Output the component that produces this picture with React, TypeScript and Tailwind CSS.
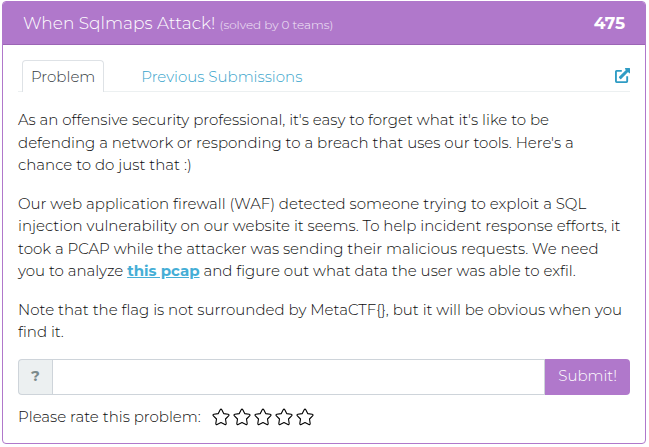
import { useState } from "react";
import type { FormEvent } from "react";

const ratings = [1, 2, 3, 4, 5];

function ExternalLinkIcon() {
  return (
    <svg viewBox="0 0 512 512" className="size-[15px]" fill="currentColor" aria-hidden="true">
      <path d="M448 279v177a56 56 0 0 1-56 56H56a56 56 0 0 1-56-56V120a56 56 0 0 1 56-56h176v64H64v320h320V279zM512 16v148c0 18-18 24-29 13l-38-38-234 234c-9 9-24 9-33 0l-39-39c-9-9-9-24 0-33L373 67l-28-28C333 27 340 0 358 0h138c9 0 16 7 16 16z" />
    </svg>
  );
}

function Star() {
  return (
    <svg viewBox="0 0 20 20" className="size-5" fill="none" stroke="currentColor" strokeWidth="1.1" strokeLinecap="round" strokeLinejoin="round" aria-hidden="true">
      <path d="M9.2 2.8Q10 1.4 10.8 2.8L12.7 6.6 17.2 7.3Q18.7 7.7 17.6 8.8L14.5 12 15.2 16.6Q15.2 18 13.9 17.4L10 15.6 6.1 17.4Q4.8 18 4.8 16.6L5.5 12 2.4 8.8Q1.3 7.7 2.8 7.3L7.3 6.6Z" />
    </svg>
  );
}

export default function App() {
  const [flag, setFlag] = useState("");
  const submit = (event: FormEvent) => event.preventDefault();

  return (
    <main className="bg-white pt-px pr-[3px] pb-1 pl-0.5 font-['Montserrat','Inter',sans-serif] text-[15px] font-light text-[#0c0c0c]">
      <article className="rounded-[4px] border border-[#b078cb]">
        <header className="flex items-center justify-between rounded-t-[3px] border-b border-[#9b65b5] bg-[#b078cb] px-5 py-2 text-white">
          <h1 className="text-[17px] leading-[26px]">
            When Sqlmaps Attack! <small className="text-xs text-white/85">(solved by 0 teams)</small>
          </h1>
          <strong className="text-[17px] leading-[26px] font-bold">475</strong>
        </header>

        <div className="p-[15px]">
          <nav className="flex items-end border-b border-[#ecf0f1] pl-1">
            <a href="#problem" className="-mb-px rounded-t-[4px] border border-b-0 border-[#dee2e6] bg-white px-2 pt-1 pb-[3px] leading-6 text-[#343a40]">
              Problem
            </a>
            <a href="#submissions" className="ml-[37px] pb-0.5 leading-6 text-[#36a3cb]">
              Previous Submissions
            </a>
            <a href="#open" aria-label="Open problem" className="mb-2 ml-auto text-[#2f9cc4]">
              <ExternalLinkIcon />
            </a>
          </nav>

          <section className="pt-[17px] pr-1 leading-normal">
            <p className="mb-4">
              As an offensive security professional, it's easy to forget what it's like to be defending
              a network or responding to a breach that uses our tools. Here's a chance to do just that :)
            </p>
            <p className="mb-4">
              Our web application firewall (WAF) detected someone trying to exploit a SQL injection
              vulnerability on our website it seems. To help incident response efforts, it took a PCAP
              while the attacker was sending their malicious requests. We need you to analyze{" "}
              <a href="#pcap" className="font-bold text-[#45aed6] underline">this pcap</a> and figure
              out what data the user was able to exfil.
            </p>
            <p className="mb-[15px]">
              Note that the flag is not surrounded by MetaCTF&#123;&#125;, but it will be obvious when
              you find it.
            </p>
          </section>

          <form onSubmit={submit} className="flex h-9">
            <label htmlFor="flag" className="flex w-[34px] items-center justify-center rounded-l-[4px] border border-r-0 border-[#ced4da] bg-[#ecf0f1] text-[15px] font-bold text-[#7b8a8b]">
              ?
            </label>
            <input id="flag" value={flag} onChange={(event) => setFlag(event.target.value)} className="min-w-0 grow border border-[#ced4da] bg-white px-3 outline-none" />
            <button type="submit" className="rounded-r-[4px] bg-[#b078cb] px-[13px] text-white">
              Submit!
            </button>
          </form>

          <div className="flex items-center pt-[11px]">
            <span className="mr-2.5">Please rate this problem:</span>
            <div className="flex gap-px text-black">
              {ratings.map((rating) => (
                <button key={rating} type="button" aria-label={`Rate ${rating} out of 5`}>
                  <Star />
                </button>
              ))}
            </div>
          </div>
        </div>
      </article>
    </main>
  );
}
